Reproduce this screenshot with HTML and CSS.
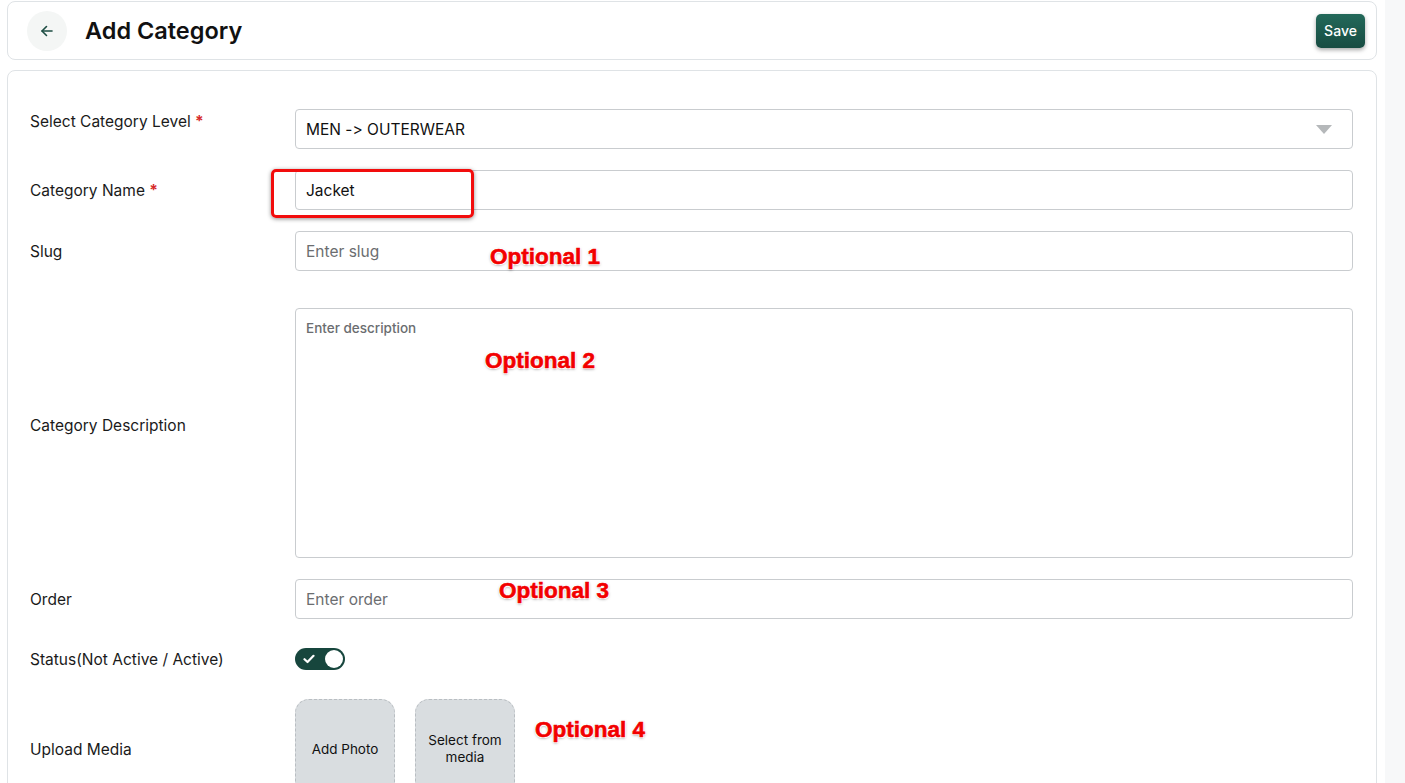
FILE: index.html
```html
<!DOCTYPE html>
<html lang="en">
<head>
    <meta charset="UTF-8">
    <meta name="viewport" content="width=device-width, initial-scale=1.0">
    <title>Add Category</title>
    <link rel="stylesheet" href="styles.css">
</head>
<body>
    <div class="page">
        <main class="content">
            <div class="header-card">
                <div class="header-left">
                    <button class="back-btn" aria-label="Back">
                        <svg width="16" height="16" viewBox="0 0 16 16" fill="none" stroke="#1d4d43" stroke-width="1.6" stroke-linecap="round" stroke-linejoin="round">
                            <path d="M13 8H3"/>
                            <path d="M7.5 3.5L3 8l4.5 4.5"/>
                        </svg>
                    </button>
                    <h1>Add Category</h1>
                </div>
                <button class="save-btn">Save</button>
            </div>

            <div class="form-card">
                <div class="form-row row-top">
                    <label class="field-label">Select Category Level <span class="req">*</span></label>
                    <div class="select-box">
                        <span>MEN -&gt; OUTERWEAR</span>
                        <span class="caret"></span>
                    </div>
                </div>

                <div class="form-row">
                    <label class="field-label" for="name">Category Name <span class="req">*</span></label>
                    <div class="field">
                        <input type="text" id="name" value="Jacket">
                        <div class="highlight-box"></div>
                    </div>
                </div>

                <div class="form-row">
                    <label class="field-label" for="slug">Slug</label>
                    <div class="field">
                        <input type="text" id="slug" placeholder="Enter slug">
                        <span class="note note-1">Optional 1</span>
                    </div>
                </div>

                <div class="form-row row-desc">
                    <label class="field-label" for="desc">Category Description</label>
                    <div class="field">
                        <textarea id="desc" placeholder="Enter description"></textarea>
                        <span class="note note-2">Optional 2</span>
                    </div>
                </div>

                <div class="form-row">
                    <label class="field-label" for="order">Order</label>
                    <div class="field">
                        <input type="text" id="order" placeholder="Enter order">
                        <span class="note note-3">Optional 3</span>
                    </div>
                </div>

                <div class="form-row row-toggle">
                    <label class="field-label">Status(Not Active / Active)</label>
                    <div class="toggle">
                        <svg class="toggle-check" width="12" height="10" viewBox="0 0 12 10" fill="none" stroke="#fff" stroke-width="2.2" stroke-linecap="round" stroke-linejoin="round">
                            <path d="M1.5 5.2l3 2.8L10.5 1.8"/>
                        </svg>
                        <span class="knob"></span>
                    </div>
                </div>

                <div class="form-row row-media">
                    <label class="field-label">Upload Media</label>
                    <div class="field media-list">
                        <div class="media-box">Add Photo</div>
                        <div class="media-box">Select from<br>media</div>
                        <span class="note note-4">Optional 4</span>
                    </div>
                </div>
            </div>
        </main>
        <aside class="side-strip"></aside>
    </div>
</body>
</html>
```

FILE: styles.css
```css
* {
    box-sizing: border-box;
}

body {
    margin: 0;
    font-family: Inter, "Noto Sans", sans-serif;
    font-feature-settings: "calt" 0;
    color: #111;
    background-color: #fff;
    overflow: hidden;
}

.page {
    display: flex;
    height: 783px;
}

.content {
    width: 1385px;
    padding: 1px 8px 0 7px;
}

.side-strip {
    flex: 1;
    background-color: #f7f8f9;
}

.header-card {
    display: flex;
    align-items: center;
    justify-content: space-between;
    height: 59px;
    padding: 0 11px 0 19px;
    border: 1px solid #dfe3e6;
    border-radius: 8px;
}

.header-left {
    display: flex;
    align-items: center;
    gap: 18px;
}

.back-btn {
    display: flex;
    align-items: center;
    justify-content: center;
    width: 40px;
    height: 40px;
    border: none;
    border-radius: 50%;
    background-color: #f4f6f5;
    padding: 0;
}

h1 {
    margin: 0;
    font-size: 23.5px;
    font-weight: 600;
}

.save-btn {
    height: 34px;
    width: 49px;
    padding: 0;
    border: none;
    border-radius: 5px;
    background: linear-gradient(#23695a, #184c42);
    color: #fff;
    font-family: Inter, sans-serif;
    font-size: 14px;
    font-weight: 500;
    box-shadow: 0 2px 4px rgba(0, 0, 0, 0.35);
}

.form-card {
    margin-top: 10px;
    height: 760px;
    padding: 38px 23px 0 22px;
    border: 1px solid #dfe3e6;
    border-radius: 8px;
}

.form-row {
    display: flex;
    align-items: center;
    margin-bottom: 21px;
}

.row-top {
    align-items: flex-start;
}

.row-top .field-label {
    margin-top: 3px;
}

.row-desc {
    margin-top: 37px;
}

.row-desc .field-label {
    margin-top: -16px;
}

.row-toggle {
    height: 40px;
    margin-top: -1px;
    margin-bottom: 20px;
}

.field-label {
    width: 265px;
    flex-shrink: 0;
    font-size: 15.5px;
    color: #1a1a1a;
}

.req {
    color: #d62b2b;
    font-weight: 700;
}

.field {
    position: relative;
    flex: 1;
}

input[type="text"],
textarea,
.select-box {
    width: 100%;
    height: 40px;
    padding: 0 10px;
    border: 1px solid #c9cccf;
    border-radius: 4px;
    font-family: Inter, sans-serif;
    font-feature-settings: "calt" 0;
    font-size: 15.5px;
    color: #111;
    background-color: #fff;
}

input::placeholder {
    color: #6b6d70;
}

.select-box {
    display: flex;
    align-items: center;
    justify-content: space-between;
    flex: 1;
    padding-right: 20px;
}

.caret {
    width: 0;
    height: 0;
    border-left: 8px solid transparent;
    border-right: 8px solid transparent;
    border-top: 9px solid #b5b8ba;
}

textarea {
    display: block;
    height: 250px;
    padding: 11px 10px;
    resize: none;
    font-size: 13.5px;
}

textarea::placeholder {
    color: #6b6d70;
    font-weight: 500;
}

.highlight-box {
    position: absolute;
    left: -24px;
    top: -1px;
    width: 203px;
    height: 49px;
    border: 3px solid #f20d0d;
    border-radius: 5px;
    box-shadow: 0 1px 4px rgba(0, 0, 0, 0.45);
    pointer-events: none;
}

.note {
    position: absolute;
    font-family: "Liberation Sans", Arial, sans-serif;
    font-weight: 700;
    font-size: 22.5px;
    color: #f20000;
    -webkit-text-stroke: 0.6px #f20000;
    text-shadow: -1px -1px 0 #fff, 1px -1px 0 #fff, -1px 1px 0 #fff, 1px 1px 0 #fff, 0 1px 3px rgba(0, 0, 0, 0.5);
    white-space: nowrap;
}

.note-1 { left: 195px; top: 13px; }
.note-2 { left: 190px; top: 40px; }
.note-3 { left: 204px; top: -1px; }
.note-4 { left: 240px; top: 18px; }

.toggle {
    position: relative;
    display: flex;
    align-items: center;
    width: 50px;
    height: 22px;
    padding: 0 2px 0 8px;
    border-radius: 11px;
    background-color: #17463d;
}

.knob {
    position: absolute;
    right: 2px;
    top: 2px;
    width: 18px;
    height: 18px;
    border-radius: 50%;
    background-color: #fff;
}

.media-list {
    display: flex;
    gap: 20px;
    height: 100px;
}

.media-box {
    display: flex;
    align-items: center;
    justify-content: center;
    width: 100px;
    height: 100px;
    border: 1px dashed #b9bec2;
    border-radius: 14px;
    background-color: #d9dde0;
    font-family: Inter, sans-serif;
    font-size: 13.5px;
    color: #111;
    text-align: center;
    line-height: 1.25;
}
```
